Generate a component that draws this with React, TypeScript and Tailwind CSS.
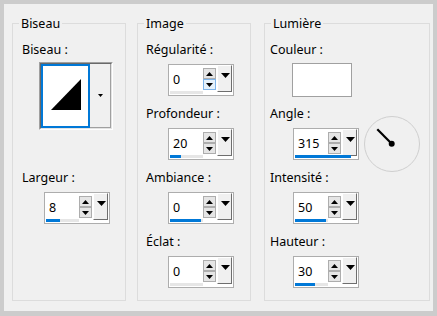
import React from "react";

function Spin({ value, bar, hover = false }: { value: string; bar: number; hover?: boolean }) {
  return (
    <div className="relative w-[66px] h-[32px] border border-[#adadad] bg-white flex">
      <div className="w-[34px] h-full pl-[4px] pt-[7px] leading-[16px] text-[12.5px] text-black">{value}</div>
      <div className="w-[13px] pt-[3px] flex flex-col">
        <div className="w-[13px] h-[11px] border border-[#adadad] bg-[#e5e5e5] flex items-center justify-center">
          <svg width="7" height="4" viewBox="0 0 7 4">
            <polygon points="3.5,0 7,4 0,4" fill="#000" />
          </svg>
        </div>
        <div
          className={
            hover
              ? "w-[13px] h-[11px] border border-[#7eb4ea] bg-[#e5f1fb] flex items-center justify-center"
              : "w-[13px] h-[11px] border border-[#adadad] bg-[#e5e5e5] flex items-center justify-center"
          }
        >
          <svg width="7" height="4" viewBox="0 0 7 4">
            <polygon points="0,0 7,0 3.5,4" fill="#000" />
          </svg>
        </div>
      </div>
      <div className="ml-[1px] w-[15px] h-[27px] bg-[#f0f0f0] border-t border-l border-t-white border-l-white border-r border-b border-r-[#6e6e6e] border-b-[#6e6e6e] pl-[3px] pt-[7px]">
        <svg width="9" height="5" viewBox="0 0 9 5" className="block">
          <polygon points="0,0 9,0 4.5,5" fill="#000" />
        </svg>
      </div>
      <div className="absolute left-[1px] top-[26px] w-[33px] h-[3px] bg-[#e6e6e6]" />
      {bar > 0 && <div className="absolute left-[1px] top-[26px] h-[3px] bg-[#0078d7]" style={{ width: bar }} />}
    </div>
  );
}

function Label({ children, className = "" }: { children: React.ReactNode; className?: string }) {
  return <div className={"h-[16px] leading-[16px] whitespace-nowrap " + className}>{children}</div>;
}

function Group({ title, className, children }: { title: string; className: string; children: React.ReactNode }) {
  return (
    <div className={"relative h-[278px] border border-[#dcdcdc] pt-[18px] " + className}>
      <div className="absolute left-[6px] top-[-8px] px-[2px] bg-[#f0f0f0] h-[16px] leading-[16px]">{title}</div>
      {children}
    </div>
  );
}

export default function App() {
  return (
    <div className="w-[437px] h-[316px] bg-[#cccccc] pt-[4px] pl-[4px] font-['Noto_Sans',sans-serif] text-[12.5px] text-black">
      <div className="w-[429px] h-[307px] bg-[#f0f0f0] flex pt-[19px] pl-[8px]">
        <Group title="Biseau" className="w-[114px]">
          <Label className="ml-[9px]">Biseau :</Label>
          <div className="ml-[26px] mt-[4px] w-[74px] h-[68px] border border-t-[#a0a0a0] border-l-[#a0a0a0] border-r-white border-b-white">
            <div className="h-full border border-t-[#696969] border-l-[#696969] border-r-[#e3e3e3] border-b-[#e3e3e3] flex">
              <div className="w-[49px] h-full border-2 border-[#0078d7] bg-white">
                <svg width="45" height="60" viewBox="0 0 45 60" className="block">
                  <polygon points="8,44 38,44 38,13" fill="#000" />
                </svg>
              </div>
              <div className="flex-1 bg-[#f0f0f0] border-r border-b border-[#a0a0a0] flex items-center justify-center">
                <svg width="5" height="3" viewBox="0 0 5 3" className="block">
                  <polygon points="0,0 5,0 2.5,3" fill="#000" />
                </svg>
              </div>
            </div>
          </div>
          <Label className="ml-[9px] mt-[40px]">Largeur :</Label>
          <div className="ml-[31px] mt-[6px]">
            <Spin value="8" bar={14} />
          </div>
        </Group>

        <Group title="Image" className="w-[114px] ml-[11px]">
          <Label className="ml-[8px]">Régularité :</Label>
          <div className="ml-[30px] mt-[6px]">
            <Spin value="0" bar={0} hover />
          </div>
          <Label className="ml-[8px] mt-[10px]">Profondeur :</Label>
          <div className="ml-[30px] mt-[6px]">
            <Spin value="20" bar={11} />
          </div>
          <Label className="ml-[8px] mt-[10px]">Ambiance :</Label>
          <div className="ml-[30px] mt-[6px]">
            <Spin value="0" bar={31} />
          </div>
          <Label className="ml-[8px] mt-[10px]">Éclat :</Label>
          <div className="ml-[30px] mt-[6px]">
            <Spin value="0" bar={0} />
          </div>
        </Group>

        <Group title="Lumière" className="w-[166px] ml-[13px]">
          <Label className="ml-[5px]">Couleur :</Label>
          <div className="ml-[27px] mt-[5px] w-[60px] h-[34px] bg-white border border-[#a0a0a0]" />
          <Label className="ml-[5px] mt-[9px]">Angle :</Label>
          <div className="ml-[28px] mt-[6px] h-[32px] flex items-center">
            <Spin value="315" bar={56} />
            <svg width="57" height="57" viewBox="0 0 57 57" className="ml-[5px] shrink-0 block">
              <circle cx="28" cy="28" r="27.5" fill="none" stroke="#cfcfcf" strokeWidth="1" />
              <line x1="13.3" y1="13.3" x2="27.7" y2="27.7" stroke="#000" strokeWidth="2.2" />
              <circle cx="27.7" cy="27.7" r="3" fill="#000" />
            </svg>
          </div>
          <Label className="ml-[5px] mt-[10px]">Intensité :</Label>
          <div className="ml-[28px] mt-[6px]">
            <Spin value="50" bar={31} />
          </div>
          <Label className="ml-[5px] mt-[10px]">Hauteur :</Label>
          <div className="ml-[28px] mt-[6px]">
            <Spin value="30" bar={20} />
          </div>
        </Group>
      </div>
    </div>
  );
}
